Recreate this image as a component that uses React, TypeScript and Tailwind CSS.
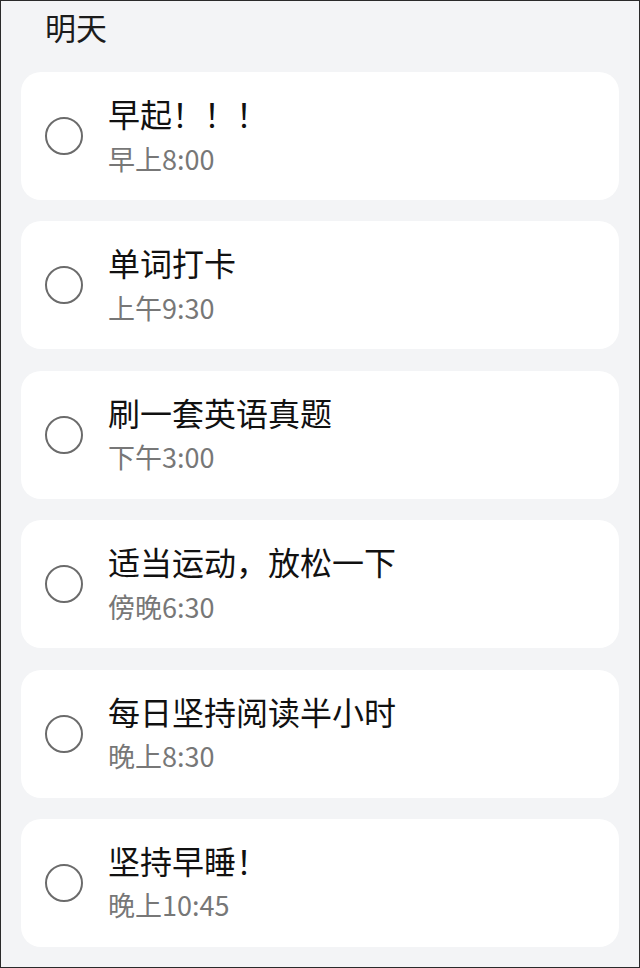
import React from "react";

const tasks = [
  { title: "早起！！！", time: "早上8:00" },
  { title: "单词打卡", time: "上午9:30" },
  { title: "刷一套英语真题", time: "下午3:00" },
  { title: "适当运动，放松一下", time: "傍晚6:30" },
  { title: "每日坚持阅读半小时", time: "晚上8:30" },
  { title: "坚持早睡！", time: "晚上10:45" },
];

export default function App() {
  return (
    <div
      className="w-[640px] h-[968px] bg-[#f3f4f6] border border-[#2a2a2a] box-border overflow-hidden"
      style={{ fontFamily: '"Noto Sans CJK SC", "Noto Sans", sans-serif' }}
    >
      <h1 className="pt-[8px] pl-[44px] text-[31px] leading-[36px] font-normal text-[#1c1c1c]">明天</h1>
      <div className="mt-[27px] ml-[20px] w-[598px] flex flex-col gap-[21.4px]">
        {tasks.map((task) => (
          <div key={task.title} className="h-[128px] bg-white rounded-[20px] flex items-center pl-[24px]">
            <div className="w-[38px] h-[38px] rounded-full border-[2.5px] border-[#6b6b6b] shrink-0" />
            <div className="ml-[25px] flex flex-col self-start pt-[22px]">
              <div className="text-[32px] leading-[38px] font-normal text-[#111111]">{task.title}</div>
              <div className="mt-[9.5px] text-[27px] leading-[34px] text-[#777777]">{task.time}</div>
            </div>
          </div>
        ))}
      </div>
    </div>
  );
}
